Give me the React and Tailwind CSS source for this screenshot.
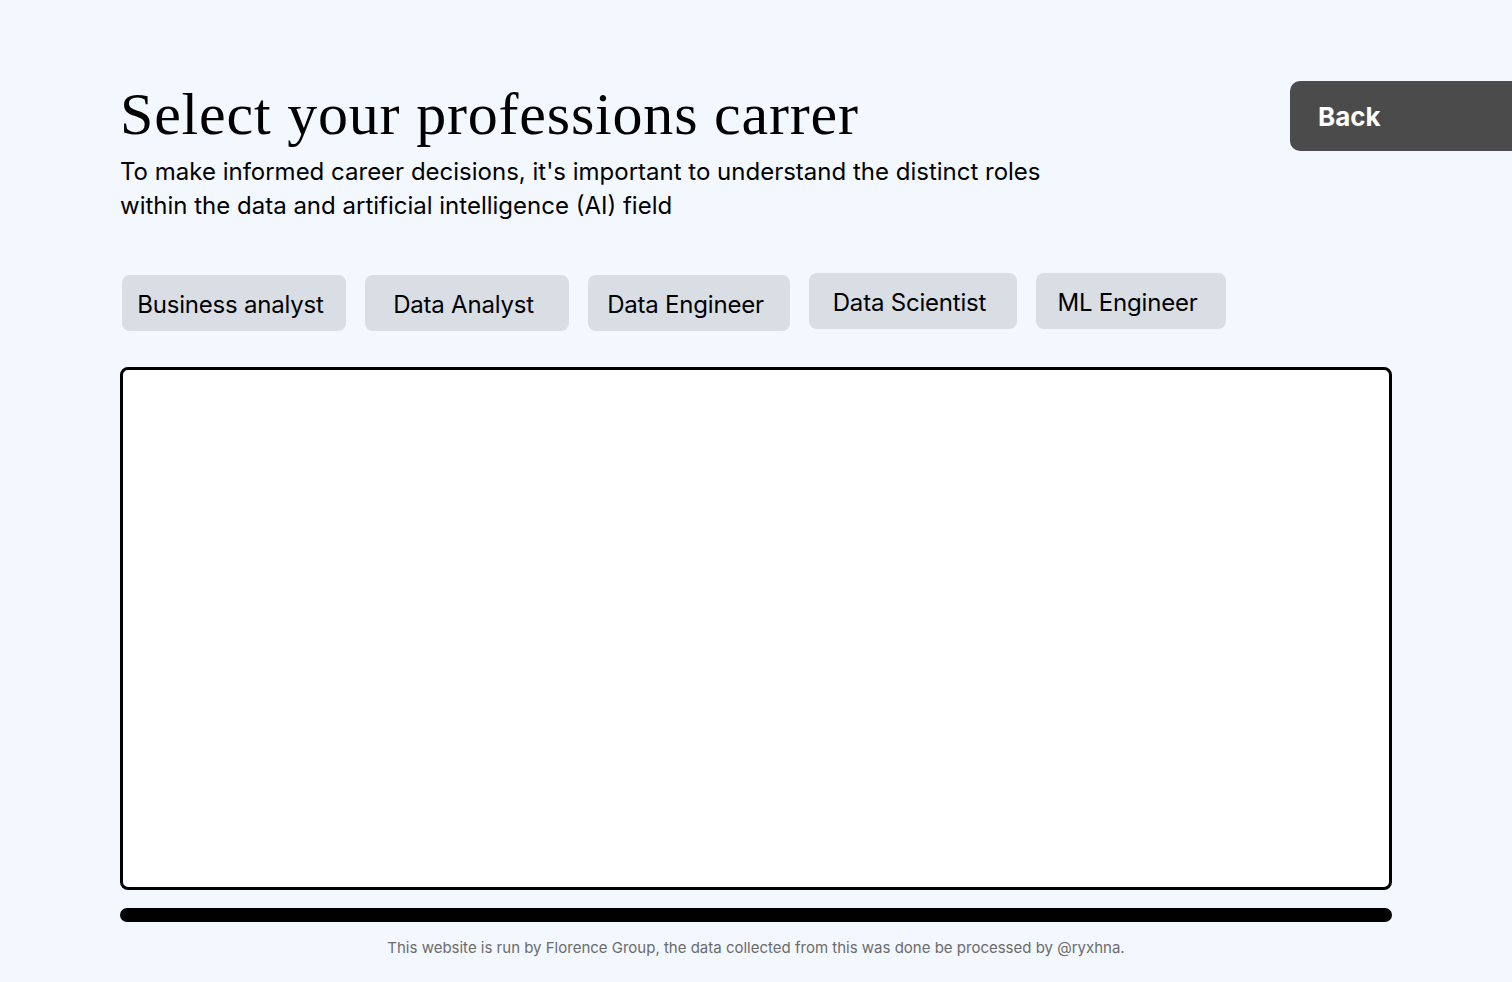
export default function App() {
  const roles = [
    { label: 'Business analyst', w: 'w-[224px]', up: false },
    { label: 'Data Analyst', w: 'w-[204px]', up: false },
    { label: 'Data Engineer', w: 'w-[202px]', up: false },
    { label: 'Data Scientist', w: 'w-[208px]', up: true },
    { label: 'ML Engineer', w: 'w-[190px]', up: true },
  ];

  return (
    <div className="min-h-[982px] w-full bg-[#f3f7fe] font-['Inter'] text-black overflow-hidden">
      <div className="flex items-start justify-between pt-[81px]">
        {/* Header */}
        <div className="pl-[120px]">
          <h1 className="font-['Liberation_Serif',serif] text-[60px] leading-[64px] tracking-[0.8px] mt-[1px]">
            Select your professions carrer
          </h1>
          <p className="max-w-[960px] text-[24px] leading-[34px] mt-[9px]">
            To make informed career decisions, it's important to understand the distinct roles within the data and artificial intelligence (AI) field
          </p>
        </div>
        <button className="w-[222px] h-[70px] bg-[#4b4b4b] rounded-l-[10px] text-white font-bold text-[26px] text-left pl-[28px] shrink-0">
          Back
        </button>
      </div>

      {/* Role tabs */}
      <div className="flex gap-[19px] pl-[122px] mt-[50px] h-[58px] items-start">
        {roles.map((r) => (
          <button
            key={r.label}
            className={`${r.w} h-[56px] rounded-[8px] bg-[#d9dee5] text-[24px] tracking-[-0.2px] leading-none flex items-center justify-center pr-[7px] pt-[4px] ${r.up ? 'mt-0' : 'mt-[2px]'}`}
          >
            {r.label}
          </button>
        ))}
      </div>

      {/* Content box */}
      <div className="mx-[120px] mt-[36px] h-[523px] bg-white border-[3px] border-black rounded-[8px]"></div>

      {/* Progress bar */}
      <div className="mx-[120px] mt-[18px] h-[14px] bg-black rounded-full"></div>

      <p className="text-center text-[15px] text-[#6b6b6b] mt-[15px]">
        This website is run by Florence Group, the data collected from this was done be processed by @ryxhna.
      </p>
    </div>
  );
}
